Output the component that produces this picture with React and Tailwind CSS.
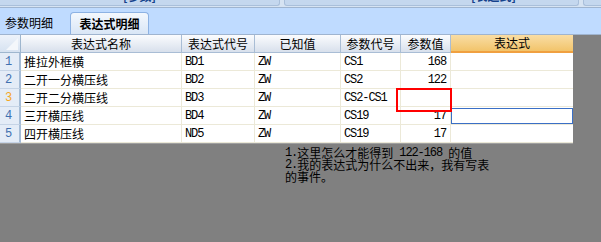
import React from "react";

const cjk = "font-['Noto_Sans_CJK_SC','Noto_Sans_CJK_SC',sans-serif]";
const mono = "font-['Liberation_Mono',monospace] text-[12px] tracking-[-1.1px] leading-[12px]";

const rows = [
  { n: "1", name: "推拉外框横", code: "BD1", known: "ZW", p: "CS1", v: "168" },
  { n: "2", name: "二开一分横压线", code: "BD2", known: "ZW", p: "CS2", v: "122" },
  { n: "3", name: "二开二分横压线", code: "BD3", known: "ZW", p: "CS2-CS1", v: "", cur: true },
  { n: "4", name: "三开横压线", code: "BD4", known: "ZW", p: "CS19", v: "17", edit: true },
  { n: "5", name: "四开横压线", code: "ND5", known: "ZW", p: "CS19", v: "17" },
];

const headers = ["表达式名称", "表达式代号", "已知值", "参数代号", "参数值"];

export default function App() {
  return (
    <div className={`w-[601px] h-[242px] bg-[#808080] overflow-hidden text-[12px] text-black ${cjk}`}>
      {/* top bar */}
      <div className="h-[8px] bg-[#d6e3f2] flex gap-[4px] border-b border-[#9fb4cf]">
        <div className="w-[280px] h-[6px] bg-[#c4d7ee] border-r border-b border-[#a9bfda] rounded-br-[3px] overflow-hidden flex justify-center">
          <span className="-mt-[10px] text-[#15428b] font-bold leading-[12px]">[参数]</span>
        </div>
        <div className="w-[295px] h-[6px] bg-[#c4d7ee] border border-t-0 border-[#a9bfda] rounded-b-[3px] overflow-hidden flex">
          <span className="-mt-[10px] ml-[186px] text-[#15428b] font-bold leading-[12px]">[表达式]</span>
        </div>
        <div className="flex-1 h-[6px] bg-[#c4d7ee] border-l border-b border-[#a9bfda] rounded-bl-[3px]" />
      </div>
      {/* tab strip */}
      <div className="h-[27px] bg-[#bfdbff] flex items-end border-b border-[#9fb4cf]">
        <div className="w-[68px] h-[22px] flex items-center pl-[5px] text-[12px] leading-[12px]">参数明细</div>
        <div className="ml-[2px] w-[79px] h-[22px] rounded-t-[4px] border border-b-0 border-[#8db2e3] bg-gradient-to-b from-[#f4f8fd] to-[#d9e6f6] flex items-center justify-center font-bold leading-[12px]">
          表达式明细
        </div>
      </div>
      {/* grid */}
      <div className="relative w-[573px] bg-white border-b border-[#a0a0a0]">
        <div className="grid grid-cols-[21px_161px_73px_86px_60px_50px_122px]">
          <div className="h-[18px] bg-gradient-to-b from-[#eef3fa] to-[#d6e2f1] border-r border-b border-[#9eb6ce] relative">
            <div className="absolute right-[2px] bottom-[2px] w-0 h-0 border-l-[12px] border-l-transparent border-b-[12px] border-b-[#f4f7fb]" />
          </div>
          {headers.map((h) => (
            <div
              key={h}
              className="h-[18px] bg-gradient-to-b from-[#fbfcfe] to-[#d8e0ec] border-r border-b border-[#a9bdd5] flex items-center justify-center leading-[12px]"
            >
              {h}
            </div>
          ))}
          <div className="h-[18px] bg-gradient-to-b from-[#f9dda4] to-[#f2c46a] border-b-2 border-[#f0a040] flex items-center justify-center leading-[12px]">
            表达式
          </div>
          {rows.map((r) => (
            <React.Fragment key={r.n}>
              <div
                className={`h-[18px] bg-[#e4ecf7] border-r-2 border-b border-r-[#a5bcd6] border-b-[#c6d4e6] flex items-center pl-[5px] ${mono} ${
                  r.cur ? "text-[#f5a623]" : "text-[#3f70b0]"
                }`}
              >
                {r.n}
              </div>
              <div className="h-[18px] border-r border-b border-[#ece9d8] flex items-center pl-[3px] leading-[12px]">{r.name}</div>
              <div className={`h-[18px] border-r border-b border-[#ece9d8] flex items-center pl-[3px] ${mono}`}>{r.code}</div>
              <div className={`h-[18px] border-r border-b border-[#ece9d8] flex items-center pl-[3px] ${mono}`}>{r.known}</div>
              <div className={`h-[18px] border-r border-b border-[#ece9d8] flex items-center pl-[3px] ${mono}`}>{r.p}</div>
              <div className={`h-[18px] border-r border-b border-[#ece9d8] flex items-center justify-end pr-[4px] ${mono}`}>{r.v}</div>
              <div className="h-[18px] border-b border-[#ece9d8] relative">
                {r.edit && <div className="absolute left-0 right-0 top-[1px] bottom-0 border border-[#3a6fc6]" />}
              </div>
            </React.Fragment>
          ))}
        </div>
        {/* red annotation box */}
        <div className="absolute left-[396px] top-[53px] w-[56px] h-[24px] border-2 border-[#ff0000]" />
      </div>
      {/* note */}
      <div className="ml-[285px] mt-[3px] leading-[12px] text-[12px]">
        <div className="h-[12px] flex items-center whitespace-pre">
          <span className={mono}>1.</span>
          <span>这里怎么才能得到</span>
          <span className={mono}> 122-168 </span>
          <span>的值</span>
        </div>
        <div className="h-[12px] flex items-center whitespace-pre">
          <span className={mono}>2.</span>
          <span>我的表达式为什么不出来，我有写表</span>
        </div>
        <div className="h-[12px] flex items-center">的事件。</div>
      </div>
    </div>
  );
}
